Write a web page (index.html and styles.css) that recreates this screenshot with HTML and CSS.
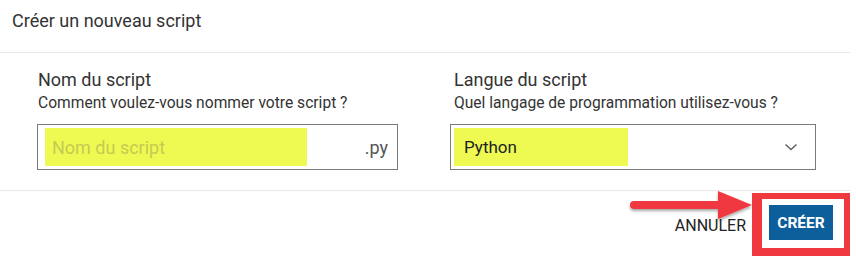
FILE: index.html
```html
<!DOCTYPE html>
<html lang="fr">
<head>
  <meta charset="UTF-8" />
  <title>Créer un nouveau script</title>
  <link rel="stylesheet" href="styles.css">
</head>
<body>

  <div class="dialog">
    <div class="dialog-title">Créer un nouveau script</div>

    <div class="dialog-body">
      <div class="field field-name">
        <div class="label">Nom du script</div>
        <div class="hint">Comment voulez-vous nommer votre script ?</div>
        <div class="input">
          <span class="mark mark-name"><span class="placeholder">Nom du script</span></span>
          <span class="suffix">.py</span>
        </div>
      </div>

      <div class="field field-lang">
        <div class="label">Langue du script</div>
        <div class="hint">Quel langage de programmation utilisez-vous ?</div>
        <div class="input select">
          <span class="mark mark-lang">Python</span>
          <svg class="chevron" width="14" height="8" viewBox="0 0 14 8">
            <path d="M1.5 1.5 L7 6.5 L12.5 1.5" fill="none" stroke="#666" stroke-width="1.6"/>
          </svg>
        </div>
      </div>
    </div>

    <div class="dialog-actions">
      <span class="cancel">ANNULER</span>
      <div class="callout">
        <button class="btn-create">CRÉER</button>
      </div>
    </div>

    <svg class="arrow" width="130" height="40" viewBox="0 0 130 40">
      <defs>
        <filter id="shadow" x="-10%" y="-30%" width="120%" height="180%">
          <feDropShadow dx="0" dy="2" stdDeviation="1.5" flood-color="#000" flood-opacity="0.35"/>
        </filter>
      </defs>
      <g filter="url(#shadow)">
        <rect x="2" y="13" width="94" height="8" rx="4" fill="#f0393f"/>
        <polygon points="90,3 124,17 90,31" fill="#f0393f"/>
      </g>
    </svg>
  </div>

</body>
</html>
```

FILE: styles.css
```css
* {
  box-sizing: border-box;
}

body {
  margin: 0;
  padding: 0;
  background: #fff;
  color: #333;
  font-family: Roboto, "Liberation Sans", Arial, sans-serif;
}

.dialog {
  position: relative;
  width: 850px;
  height: 256px;
  overflow: hidden;
}

.dialog-title {
  height: 53px;
  padding: 10px 12px 0;
  font-size: 18px;
  border-bottom: 1px solid #e8e8e8;
}

.dialog-body {
  display: flex;
  height: 138px;
  padding: 16px 0 0 37px;
  border-bottom: 1px solid #e8e8e8;
}

.field-name {
  width: 361px;
}

.field-lang {
  width: 366px;
  margin-left: 52px;
}

.field-lang .label,
.field-lang .hint {
  padding-left: 4px;
}

.label {
  font-size: 18px;
  line-height: 22px;
  padding-left: 1px;
}

.hint {
  font-size: 15.6px;
  line-height: 19px;
  margin-top: 3px;
  padding-left: 1px;
}

.input {
  display: flex;
  align-items: center;
  height: 46px;
  margin-top: 11px;
  padding: 3px 9px 3px 7px;
  border: 1px solid #7a7a7a;
}

.mark {
  display: flex;
  align-items: center;
  height: 38px;
  background: #eefa52;
}

.mark-name {
  width: 262px;
  padding-left: 7px;
  font-size: 18px;
}

.placeholder {
  color: #c4cc52;
}

.suffix {
  margin-left: auto;
  font-size: 18px;
  color: #555;
}

.select {
  padding-left: 3px;
  padding-right: 17px;
}

.mark-lang {
  width: 174px;
  padding-left: 10px;
  font-size: 17px;
  color: #222;
}

.chevron {
  margin-left: auto;
}

.dialog-actions {
  display: flex;
  justify-content: flex-end;
  align-items: flex-start;
  padding-top: 2px;
}

.cancel {
  margin-top: 23px;
  margin-right: 6px;
  font-size: 16px;
  color: #222;
}

.callout {
  width: 98px;
  height: 65px;
  padding: 6px 6px 0 7px;
  border: solid #f0393f;
  border-width: 6px 6px 10px 10px;
  background: #fff;
}

.btn-create {
  width: 64px;
  height: 35px;
  padding: 0;
  border: none;
  background: #0d5f9c;
  color: #fff;
  font-family: Roboto, "Liberation Sans", Arial, sans-serif;
  font-size: 15.5px;
  font-weight: 700;
}

.arrow {
  position: absolute;
  left: 628px;
  top: 188px;
}
```
